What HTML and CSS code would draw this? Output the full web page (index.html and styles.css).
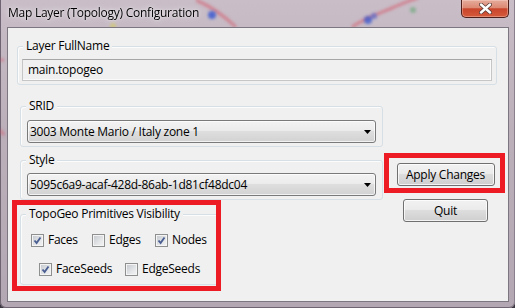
FILE: index.html
```html
<!DOCTYPE html>
<html lang="en">
<head>
    <meta charset="UTF-8">
    <title>Map Layer (Topology) Configuration</title>
    <link rel="stylesheet" href="styles.css">
</head>
<body>
    <div class="window">
        <svg class="glass" width="515" height="308" viewBox="0 0 515 308">
            <defs>
                <filter id="soft"><feGaussianBlur stdDeviation="1.6"/></filter>
            </defs>
            <g filter="url(#soft)" fill="none" stroke-width="3">
                <path d="M196 0 C210 6 222 14 236 27" stroke="#d8485a" opacity="0.5"/>
                <path d="M352 27 C362 20 378 14 392 8 C402 4 410 0 418 -2" stroke="#d8485a" opacity="0.5"/>
                <path d="M0 60 L4 60 M0 130 L4 135" stroke="#d8485a" opacity="0.45"/>
            </g>
            <g filter="url(#soft)">
                <circle cx="212" cy="15" r="4" fill="#2a4ed0" opacity="0.75"/>
                <circle cx="368" cy="20" r="4" fill="#2a4ed0" opacity="0.7"/>
                <circle cx="374" cy="16" r="3" fill="#3a62d8" opacity="0.6"/>
                <circle cx="113" cy="26" r="3" fill="#d8d040" opacity="0.5"/>
                <circle cx="413" cy="10" r="3" fill="#4aa060" opacity="0.5"/>
            </g>
        </svg>

        <div class="titlebar">
            <span class="title">Map Layer (Topology) Configuration</span>
            <span class="close">
                <svg width="13" height="11" viewBox="0 0 13 11">
                    <path d="M2 1.5 L11 9.5 M11 1.5 L2 9.5" stroke="#5a3a36" stroke-width="4" stroke-linecap="round"/>
                    <path d="M2 1.5 L11 9.5 M11 1.5 L2 9.5" stroke="#ffffff" stroke-width="2.4" stroke-linecap="round"/>
                </svg>
            </span>
        </div>

        <div class="client">
            <div class="group full">
                <div class="label">Layer FullName</div>
                <div class="textbox">main.topogeo</div>
            </div>

            <div class="main">
                <div class="left">
                    <div class="group srid">
                        <div class="label">SRID</div>
                        <div class="combo">
                            <span>3003 Monte Mario / Italy zone 1</span>
                            <svg class="arrow" width="7" height="4" viewBox="0 0 7 4"><path d="M0 0 H7 L3.5 4 Z" fill="#000"/></svg>
                        </div>
                    </div>
                    <div class="group style">
                        <div class="label">Style</div>
                        <div class="combo">
                            <span>5095c6a9-acaf-428d-86ab-1d81cf48dc04</span>
                            <svg class="arrow" width="7" height="4" viewBox="0 0 7 4"><path d="M0 0 H7 L3.5 4 Z" fill="#000"/></svg>
                        </div>
                    </div>
                    <div class="group topo">
                        <div class="label">TopoGeo Primitives Visibility</div>
                        <div class="checks row1">
                            <label class="check"><span class="box on"><svg width="11" height="11" viewBox="0 0 11 11"><path d="M2.5 5.5 L4.6 8 L8.5 2.5" fill="none" stroke="#4a5e92" stroke-width="1.9"/></svg></span>Faces</label>
                            <label class="check"><span class="box"></span>Edges</label>
                            <label class="check"><span class="box on"><svg width="11" height="11" viewBox="0 0 11 11"><path d="M2.5 5.5 L4.6 8 L8.5 2.5" fill="none" stroke="#4a5e92" stroke-width="1.9"/></svg></span>Nodes</label>
                        </div>
                        <div class="checks row2">
                            <label class="check"><span class="box on"><svg width="11" height="11" viewBox="0 0 11 11"><path d="M2.5 5.5 L4.6 8 L8.5 2.5" fill="none" stroke="#4a5e92" stroke-width="1.9"/></svg></span>FaceSeeds</label>
                            <label class="check"><span class="box"></span>EdgeSeeds</label>
                        </div>
                    </div>
                </div>

                <div class="right">
                    <button class="btn apply">Apply Changes</button>
                    <button class="btn quit">Quit</button>
                </div>
            </div>

            <!-- red annotation boxes -->
            <div class="mark mark-apply"></div>
            <div class="mark mark-topo"></div>
        </div>
    </div>
</body>
</html>
```

FILE: styles.css
```css
body {
    margin: 0;
    background: #3b3740;
    font-family: "Segoe UI", "Open Sans", sans-serif;
    font-size: 12px;
    letter-spacing: -0.25px;
    color: #000;
}
.window {
    width: 515px;
    height: 308px;
    box-sizing: border-box;
    position: relative;
    overflow: hidden;
    padding: 0 6px 6px 7px;
    display: flex;
    flex-direction: column;
    background: linear-gradient(to bottom, #c9bec8 0%, #bcb0bb 40%, #b3a7b3 100%);
    box-shadow: inset 1px 0 0 #6e6472, inset -1px 0 0 #8a7f8c, inset 0 -1px 0 #6e6472;
    border-radius: 0 0 6px 6px;
}
.glass {
    position: absolute;
    top: 0;
    left: 0;
}
.titlebar {
    height: 27px;
    display: flex;
    align-items: flex-start;
    position: relative;
}
.title {
    margin: 5px 0 0 1px;
    line-height: 16px;
    text-shadow: 0 0 6px rgba(255, 255, 255, 0.8), 0 0 2px rgba(255, 255, 255, 0.6);
}
.close {
    margin-left: auto;
    width: 48px;
    height: 18px;
    box-sizing: border-box;
    border: 1px solid #4d1f18;
    border-top: none;
    border-radius: 0 0 5px 5px;
    background: linear-gradient(to bottom, #e6ab9b 0%, #dc8a74 45%, #c9452b 52%, #d55a3c 100%);
    box-shadow: inset 0 0 0 1px rgba(255, 230, 220, 0.35);
    display: flex;
    align-items: center;
    justify-content: center;
}
.close svg {
    display: block;
}
.client {
    flex: 1;
    position: relative;
    background: #f0f0f0;
    border: 1px solid #7c7680;
}
.group {
    border: 1px solid #d5dfe5;
    border-radius: 3px;
    box-sizing: border-box;
    box-shadow: inset 1px 1px 0 #fcfcfc;
    padding-bottom: 3px;
}
.label {
    width: fit-content;
    margin: -9px 0 0 5px;
    padding: 0 3px;
    background: #f0f0f0;
    line-height: 16px;
}
.full {
    margin: 18px 0 0 9px;
    width: 480px;
}
.textbox {
    margin: 5px 4px 0;
    height: 22px;
    box-sizing: border-box;
    border: 1px solid #c6c6c6;
    border-top-color: #a6a6a6;
    box-shadow: inset -1px -1px 0 #fafafa;
    padding: 0 5px;
    line-height: 20px;
}
.main {
    display: flex;
}
.left {
    width: 363px;
    margin-left: 12px;
}
.srid {
    margin-top: 21px;
}
.style {
    margin-top: 13px;
}
.combo {
    margin: 5px 6px 0;
    height: 23px;
    box-sizing: border-box;
    border: 1px solid #7a7a7a;
    border-radius: 3px;
    padding-left: 2px;
    display: flex;
    align-items: center;
    justify-content: space-between;
    background: linear-gradient(to bottom, #f3f3f3 0%, #ececec 45%, #dedede 50%, #d2d2d2 100%);
    box-shadow: inset 0 0 0 1px rgba(255, 255, 255, 0.7);
}
.srid .combo {
    margin-top: 6px;
}
.arrow {
    margin-right: 4px;
}
.topo {
    margin-top: 14px;
    width: 200px;
    padding-bottom: 7px;
}
.checks {
    display: grid;
    line-height: 16px;
}
.row1 {
    margin-top: 10px;
    padding-left: 10px;
    grid-template-columns: 61px 63px auto;
}
.row2 {
    margin-top: 13px;
    padding-left: 18px;
    grid-template-columns: 86px auto;
}
.check {
    display: flex;
    align-items: center;
    gap: 4px;
}
.box {
    width: 13px;
    height: 13px;
    box-sizing: border-box;
    border: 1px solid #8e8f8f;
    background: linear-gradient(135deg, #c2c6cc 0%, #e4e6e8 60%, #f4f4f4 100%);
    box-shadow: inset 0 0 0 1px #f4f4f4;
    display: flex;
    align-items: center;
    justify-content: center;
}
.box svg {
    display: block;
}
.right {
    flex: 1;
    display: flex;
    flex-direction: column;
    align-items: center;
    padding-top: 78px;
    gap: 13px;
}
.btn {
    height: 23px;
    box-sizing: border-box;
    border: 1px solid #707070;
    border-radius: 3px;
    font-family: inherit;
    font-size: 12px;
    letter-spacing: inherit;
    color: #000;
    padding: 0;
    background: linear-gradient(to bottom, #f2f2f2 0%, #ebebeb 45%, #dddddd 50%, #cfcfcf 100%);
    box-shadow: inset 0 0 0 1px rgba(255, 255, 255, 0.75);
}
.apply {
    width: 98px;
}
.quit {
    width: 85px;
}
.mark {
    position: absolute;
    border: 5px solid #ed1c24;
    box-sizing: border-box;
}
.mark-apply {
    left: 376px;
    top: 125px;
    width: 121px;
    height: 40px;
}
.mark-topo {
    left: 4px;
    top: 172px;
    width: 209px;
    height: 91px;
}
```
